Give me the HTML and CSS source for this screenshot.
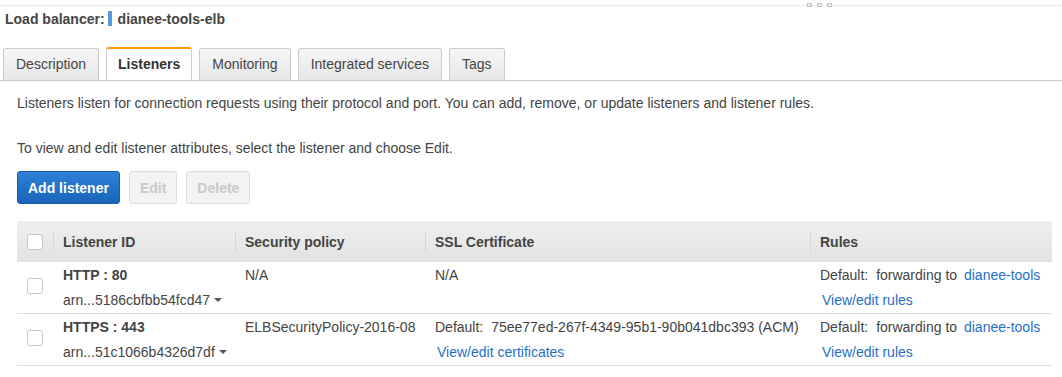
FILE: index.html
```html
<!DOCTYPE html>
<html lang="en">
<head>
    <meta charset="UTF-8">
    <meta name="viewport" content="width=device-width, initial-scale=1.0">
    <title>Load balancer: dianee-tools-elb</title>
    <link rel="stylesheet" href="styles.css">
</head>
<body>
    <div class="splitter">
        <div class="grip"><span></span><span></span><span></span></div>
    </div>
    <div class="title">
        <span>Load balancer:</span><span class="marker"></span><span>dianee-tools-elb</span>
    </div>
    <div class="tabs">
        <div class="tab">Description</div>
        <div class="tab active">Listeners</div>
        <div class="tab">Monitoring</div>
        <div class="tab">Integrated services</div>
        <div class="tab">Tags</div>
    </div>
    <div class="panel">
        <p class="intro">Listeners listen for connection requests using their protocol and port. You can add, remove, or update listeners and listener rules.</p>
        <p class="hint">To view and edit listener attributes, select the listener and choose Edit.</p>
        <div class="actions">
            <button class="btn primary">Add listener</button>
            <button class="btn" disabled>Edit</button>
            <button class="btn" disabled>Delete</button>
        </div>
        <table class="listeners">
            <colgroup>
                <col style="width: 36px">
                <col style="width: 182px">
                <col style="width: 190px">
                <col style="width: 385px">
                <col>
            </colgroup>
            <thead>
                <tr>
                    <th class="check"><span class="box"></span></th>
                    <th><span class="sep"></span>Listener ID</th>
                    <th><span class="sep"></span>Security policy</th>
                    <th><span class="sep"></span>SSL Certificate</th>
                    <th><span class="sep"></span>Rules</th>
                </tr>
            </thead>
            <tbody>
                <tr>
                    <td class="check"><span class="box"></span></td>
                    <td>
                        <div class="line strong">HTTP : 80</div>
                        <div class="line second">arn...5186cbfbb54fcd47<span class="caret"></span></div>
                    </td>
                    <td><div class="line">N/A</div></td>
                    <td><div class="line">N/A</div></td>
                    <td>
                        <div class="line"><span class="label">Default:</span> forwarding to <a href="#">dianee-tools</a></div>
                        <div class="line second"><a href="#" class="indent">View/edit rules</a></div>
                    </td>
                </tr>
                <tr>
                    <td class="check"><span class="box"></span></td>
                    <td>
                        <div class="line strong">HTTPS : 443</div>
                        <div class="line second">arn...51c1066b4326d7df<span class="caret"></span></div>
                    </td>
                    <td><div class="line">ELBSecurityPolicy-2016-08</div></td>
                    <td>
                        <div class="line"><span class="label">Default:</span> 75ee77ed-267f-4349-95b1-90b041dbc393 (ACM)</div>
                        <div class="line second"><a href="#" class="indent">View/edit certificates</a></div>
                    </td>
                    <td>
                        <div class="line"><span class="label">Default:</span> forwarding to <a href="#">dianee-tools</a></div>
                        <div class="line second"><a href="#" class="indent">View/edit rules</a></div>
                    </td>
                </tr>
            </tbody>
        </table>
    </div>
</body>
</html>
```

FILE: styles.css
```css
body {
    font-family: "Liberation Sans", Arial, sans-serif;
    font-size: 14px;
    color: #444;
    margin: 0;
    padding: 0;
    background-color: #fff;
}
.splitter {
    height: 5px;
    border-bottom: 1px solid #e9e9e9;
    position: relative;
}
.grip {
    position: absolute;
    left: 807px;
    top: 3px;
    display: flex;
    gap: 5px;
}
.grip span {
    width: 3px;
    height: 2px;
    border: 1px solid #c4c4c4;
    background-color: #eee;
}
.title {
    margin-top: 4px;
    padding-left: 5px;
    height: 17px;
    font-weight: bold;
    color: #444;
    display: flex;
    align-items: center;
}
.marker {
    width: 4px;
    height: 15px;
    background-color: #5b9bd5;
    margin: 0 6px 0 3px;
}
.tabs {
    margin-top: 20px;
    padding-left: 3px;
    display: flex;
    align-items: flex-end;
    gap: 7px;
    border-bottom: 1px solid #ccc;
}
.tab {
    height: 31px;
    line-height: 31px;
    padding: 0 12px;
    border: 1px solid #ccc;
    border-bottom: none;
    border-radius: 3px 3px 0 0;
    background: linear-gradient(#f7f7f7, #e6e6e6);
    color: #444;
}
.tab.active {
    padding: 0 11px;
    border-top: 2px solid #f90;
    background: #fff;
    font-weight: bold;
    color: #333;
}
.panel {
    padding: 0 10px 0 17px;
}
.panel p {
    margin: 0;
    line-height: 20px;
}
.intro {
    padding-top: 12px;
}
.hint {
    margin-top: 25px !important;
}
.actions {
    margin-top: 13px;
    display: flex;
    gap: 9px;
}
.btn {
    font-family: inherit;
    font-size: 14px;
    font-weight: bold;
    height: 33px;
    padding: 0 10px;
    border: 1px solid #ddd;
    border-radius: 3px;
    background-color: #f3f3f3;
    color: #c9c9c9;
}
.btn.primary {
    background: linear-gradient(#2f80d8, #1865ba);
    border-color: #1b5ca6;
    color: #fff;
}
.listeners {
    margin-top: 17px;
    width: 1035px;
    table-layout: fixed;
    border-collapse: collapse;
}
.listeners th {
    height: 40px;
    padding: 0 0 0 10px;
    text-align: left;
    font-weight: bold;
    color: #444;
    background: linear-gradient(#efefef, #e1e1e1);
    border-top: 1px solid #f4f4f4;
    position: relative;
}
.sep {
    position: absolute;
    left: 0;
    top: 10px;
    height: 19px;
    border-left: 1px solid #d4d4d4;
}
.listeners td {
    padding: 5px 0 5px 10px;
    vertical-align: top;
    border-bottom: 1px solid #ddd;
    white-space: nowrap;
}
.listeners td.check {
    padding: 0 0 3px 10px;
    vertical-align: middle;
}
.box {
    display: block;
    width: 14px;
    height: 14px;
    border: 1px solid #c6c6c6;
    border-radius: 3px;
    background-color: #fff;
}
.line {
    height: 16px;
    line-height: 16px;
}
.line.second {
    margin-top: 9px;
}
.strong {
    font-weight: bold;
    color: #444;
}
.label {
    margin-right: 4px;
}
.caret {
    display: inline-block;
    margin-left: 4px;
    vertical-align: 3px;
    border-left: 4px solid transparent;
    border-right: 4px solid transparent;
    border-top: 4px solid #555;
}
a {
    color: #1f6fc5;
    text-decoration: none;
    margin-left: 3px;
}
a.indent {
    margin-left: 2px;
}
```
